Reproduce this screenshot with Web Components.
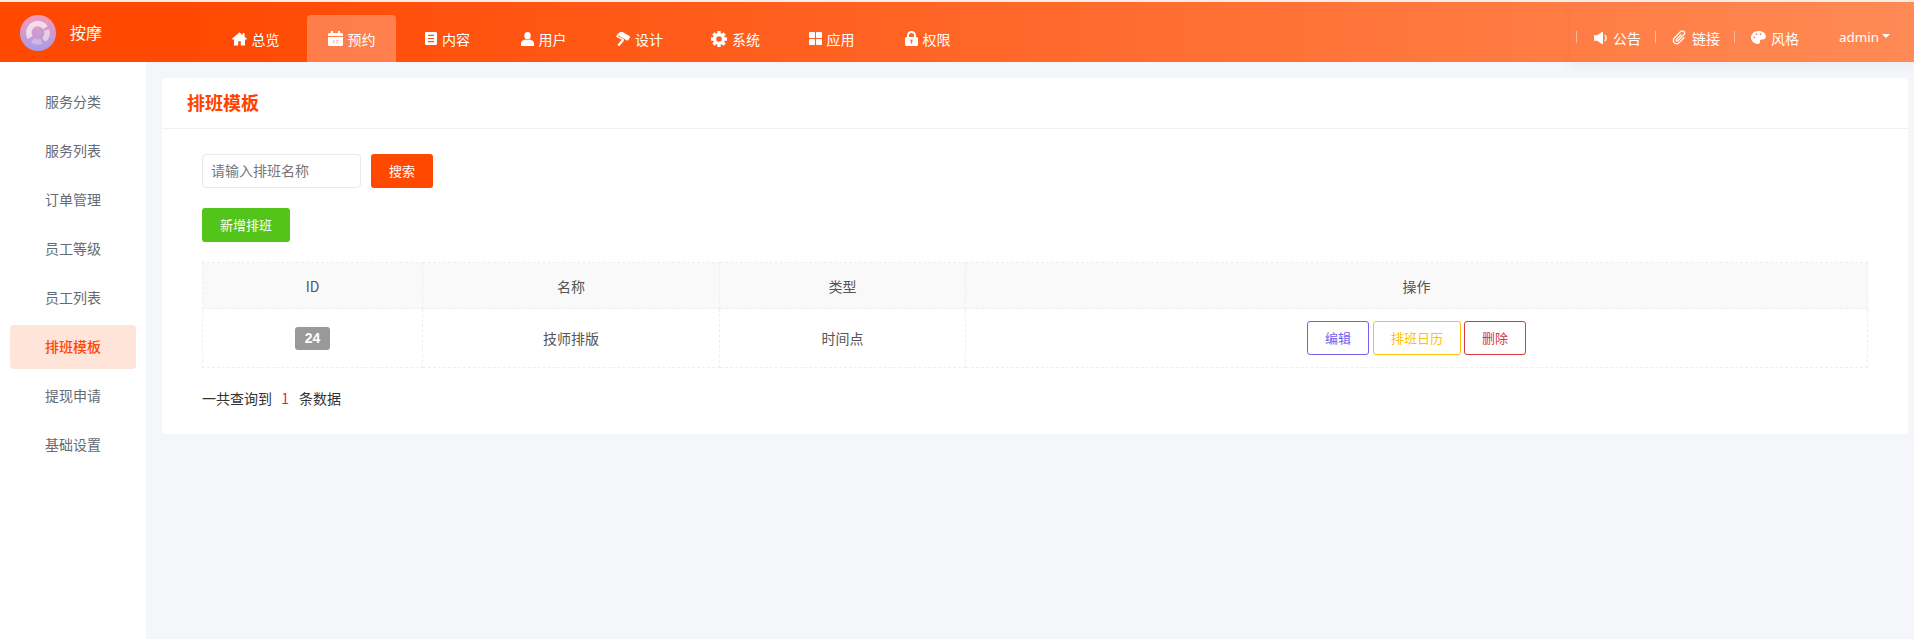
<!DOCTYPE html>
<html lang="zh">
<head>
<meta charset="utf-8">
<title>排班模板</title>
<style>
  html, body { margin: 0; height: 100%; }
  body {
    background: #f5f6fa;
    font-family: "Noto Sans CJK SC", "Liberation Sans", sans-serif;
    font-size: 14px;
    overflow: hidden;
  }
</style>
</head>
<body>
<admin-page>
  <top-bar slot="top"></top-bar>
  <side-menu slot="side"></side-menu>
  <schedule-panel></schedule-panel>
</admin-page>

<script>
const ICONS = {
  home: '<svg width="15" height="14" viewBox="0 0 15 14"><path fill="#fff" d="M7.500.3 0 6.800l1 1.100 1-.8v6.500h4.200V9.300h2.600v4.300H13V7.100l1 .8 1-1.100-2.400-2.100V1.300h-2v1.900z"/></svg>',
  calendar: '<svg width="15" height="15" viewBox="0 0 15 15"><path fill="#fff" d="M3 0h2v2h5V0h2v2h1.500A1.500 1.500 0 0 1 15 3.500V5H0V3.500A1.500 1.500 0 0 1 1.500 2H3zM0 6h15v7.500a1.500 1.500 0 0 1-1.500 1.500h-12A1.500 1.500 0 0 1 0 13.500z"/><path fill="#ffc4ac" d="M5 9h1.500v3.500H5zM8 9h2.500v1.200H8zM8 11.300h2.500v1.200H8z"/></svg>',
  book: '<svg width="12" height="13" viewBox="0 0 12 13"><path fill="#fff" fill-rule="evenodd" d="M1.300 0h9.400A1.300 1.300 0 0 1 12 1.300v10.400a1.300 1.300 0 0 1-1.300 1.300H1.300A1.300 1.300 0 0 1 0 11.700V1.300A1.300 1.300 0 0 1 1.300 0zM3 2.800V4h6V2.800zM3 5.900v1.200h6V5.900zM3 9v1.200h6V9z"/></svg>',
  user: '<svg width="13" height="14" viewBox="0 0 13 14"><ellipse cx="6.500" cy="3.800" rx="3.200" ry="3.700" fill="#fff"/><path fill="#fff" d="M4.400 7.500c1.200 1 3 1 4.200 0C11 7.800 13 9.300 13 11.700V14H0v-2.300C0 9.300 2 7.800 4.400 7.500z"/></svg>',
  roller: '<svg width="14" height="14" viewBox="0 0 14 14"><rect x="2.300" y="1.300" width="11.500" height="5" rx="1" fill="#fff" transform="rotate(30 8 4)"/><path fill="none" stroke="#fff" stroke-width="1.200" d="M2.600 1.600.9 4.400l6.700 3.500"/><path fill="none" stroke="#fff" stroke-width="2.400" stroke-linecap="round" d="M6.800 8.300 3 12.800"/></svg>',
  cog: '<svg width="16" height="16" viewBox="0 0 16 16"><circle cx="8" cy="8" r="4.400" fill="none" stroke="#fff" stroke-width="3.200"/><g fill="#fff"><rect x="6.300" y="0" width="3.400" height="3" rx=".5"/><rect x="6.300" y="13" width="3.400" height="3" rx=".5"/><rect x="0" y="6.300" width="3" height="3.400" rx=".5"/><rect x="13" y="6.300" width="3" height="3.400" rx=".5"/><g transform="rotate(45 8 8)"><rect x="6.300" y="0" width="3.400" height="3" rx=".5"/><rect x="6.300" y="13" width="3.400" height="3" rx=".5"/><rect x="0" y="6.300" width="3" height="3.400" rx=".5"/><rect x="13" y="6.300" width="3" height="3.400" rx=".5"/></g></g></svg>',
  grid: '<svg width="13" height="13" viewBox="0 0 13 13"><g fill="#fff"><rect width="6" height="6" rx=".8"/><rect x="7" width="6" height="6" rx=".8"/><rect y="7" width="6" height="6" rx=".8"/><rect x="7" y="7" width="6" height="6" rx=".8"/></g></svg>',
  lock: '<svg width="13" height="15" viewBox="0 0 13 15"><path fill="#fff" fill-rule="evenodd" d="M6.500 0A4.500 4.500 0 0 1 11 4.500V6h.5A1.500 1.500 0 0 1 13 7.500v6a1.500 1.500 0 0 1-1.500 1.500h-10A1.500 1.500 0 0 1 0 13.500v-6A1.500 1.500 0 0 1 1.500 6H2V4.500A4.500 4.500 0 0 1 6.500 0zm0 2A2.500 2.500 0 0 0 4 4.500V6h5V4.500A2.500 2.500 0 0 0 6.500 2zm0 6.500a1.200 1.200 0 0 0-.6 2.200V12.500h1.200v-1.800a1.200 1.200 0 0 0-.6-2.200z"/></svg>',
  volume: '<svg width="13" height="12" viewBox="0 0 13 12"><path fill="#fff" d="M0 3.300h3.200L8 0h1v12H8L3.200 8.700H0z"/><path fill="none" stroke="#fff" stroke-width="1.300" d="M10.800 3c1.500 1.700 1.500 4.300 0 6"/></svg>',
  clip: '<svg width="15" height="15" viewBox="-2.800 .6 14.800 14.800"><path fill="none" stroke="#fff" stroke-width="1.200" stroke-linecap="round" transform="rotate(45 4.600 8)" d="M3.700 5v6.500a1 1 0 0 0 2 0V3a2.200 2.200 0 0 0-4.400 0v9a3.300 3.300 0 0 0 6.600 0V5"/></svg>',
  palette: '<svg width="15" height="13" viewBox="0 0 15 13"><path fill="#fff" fill-rule="evenodd" d="M7.500 0C12 0 15 2.500 15 5.600c0 2.200-1.800 3.100-3.500 3-1.500-.1-2.500.3-2.500 1.700 0 1.300-.3 2.700-2 2.700C3 13 0 10 0 6.500 0 2.800 3.300 0 7.500 0zM3.500 5.500a.9.9 0 1 0 0 1.800.9.900 0 0 0 0-1.800zM5.500 2.300a.9.900 0 1 0 0 1.800.9.900 0 0 0 0-1.800zM9.500 2.300a.9.900 0 1 0 0 1.800.9.900 0 0 0 0-1.800z"/></svg>'
};

// small helper, every element below only differs by its markup
class ShadowEl extends HTMLElement {
  constructor() {
    super();
    this.shadowDOM = this.attachShadow({ mode: 'open' });
  }
  connectedCallback() {
    this.render();
  }
}

class AdminPage extends ShadowEl {
  render() {
    this.shadowDOM.innerHTML = `
      <style>
        :host { display: flex; flex-direction: column; height: 100vh; }
        .body { display: flex; flex: 1; min-height: 0; }
        .main { flex: 1; min-width: 0; padding: 16px 6px 0 16px; }
      </style>
      <slot name="top"></slot>
      <div class="body">
        <slot name="side"></slot>
        <div class="main"><slot></slot></div>
      </div>`;
  }
}

class NavItem extends ShadowEl {
  render() {
    const active = this.hasAttribute('active');
    this.shadowDOM.innerHTML = `
      <style>
        :host { display: flex; width: 89px; margin-right: 7px; height: 47px; }
        a {
          flex: 1; display: flex; align-items: center; justify-content: center; gap: 5px;
          color: #fff; font-size: 14px; box-sizing: border-box;
          border-radius: 4px 4px 0 0;
          background: ${active ? 'rgba(255,255,255,.27)' : 'transparent'};
        }
        svg { display: block; }
      </style>
      <a>${ICONS[this.getAttribute('icon')]}<span><slot></slot></span></a>`;
  }
}

class ToolItem extends ShadowEl {
  render() {
    this.shadowDOM.innerHTML = `
      <style>
        :host { display: flex; align-items: center; color: #fff; font-size: 14px; gap: 5px; height: 60px; padding-top: 11px; box-sizing: border-box; }
        .sep { width: 1px; height: 12px; background: rgba(255,255,255,.45); margin-right: 10px; margin-top: -2px; }
        svg { display: block; }
        .ic { display: flex; width: 16px; justify-content: center; }
      </style>
      <div class="sep"></div>
      <span class="ic">${ICONS[this.getAttribute('icon')]}</span>
      <span><slot></slot></span>`;
  }
}

class TopBar extends ShadowEl {
  render() {
    this.shadowDOM.innerHTML = `
      <style>
        :host {
          display: flex; flex: none; height: 60px; position: relative; z-index: 2;
          border-top: 2px solid #fbece5;
          background: linear-gradient(90deg, #ff4800, #ff4a04 12%, #ff8a55);
        }
        .brand { width: 211px; display: flex; align-items: center; padding-left: 20px; box-sizing: border-box; gap: 14px; color: #fff; font-size: 16px; padding-top: 2px; }
        .brand svg { display: block; }
        .brand span { margin-top: -2px; }
        nav { display: flex; align-items: flex-end; flex: 1; }
        .tools {
          display: flex; align-items: center; padding: 0 24px 0 6px; gap: 14px;
          box-shadow: 0 5px 12px rgba(60,60,100,.05);
        }
        .admin { color: #fff; font-size: 13.4px; font-family: "Noto Sans", "Liberation Sans", sans-serif; margin-left: 26px; display: flex; align-items: center; gap: 3px; padding-top: 9px; }
        .admin i { width: 0; height: 0; border: 4px solid transparent; border-top-color: #fff; border-bottom: 0; margin-top: -2px; }
      </style>
      <div class="brand">
        <svg width="36" height="36" viewBox="0 0 36 36">
          <defs><linearGradient id="lg" x1="0" y1="0" x2="0" y2="1"><stop offset="0" stop-color="#f59ab8"/><stop offset="1" stop-color="#a79be6"/></linearGradient></defs>
          <circle cx="18" cy="18" r="18" fill="url(#lg)"/>
          <g fill="none" stroke="#fff" stroke-width="5.500">
            <path stroke-opacity=".65" d="M10.200 22.500A9 9 0 1 1 25.400 12.800"/>
            <path stroke-opacity=".5" d="M26.500 15A9 9 0 0 1 23.800 24.900"/>
            <path stroke-opacity=".28" d="M21.500 26.300A9 9 0 0 1 12.500 25.100"/>
          </g>
        </svg>
        <span>按摩</span>
      </div>
      <nav>
        <nav-item icon="home">总览</nav-item>
        <nav-item icon="calendar" active>预约</nav-item>
        <nav-item icon="book">内容</nav-item>
        <nav-item icon="user">用户</nav-item>
        <nav-item icon="roller">设计</nav-item>
        <nav-item icon="cog">系统</nav-item>
        <nav-item icon="grid">应用</nav-item>
        <nav-item icon="lock">权限</nav-item>
      </nav>
      <div class="tools">
        <tool-item icon="volume">公告</tool-item>
        <tool-item icon="clip">链接</tool-item>
        <tool-item icon="palette">风格</tool-item>
        <div class="admin">admin<i></i></div>
      </div>`;
  }
}

class SideItem extends ShadowEl {
  render() {
    const active = this.hasAttribute('active');
    this.shadowDOM.innerHTML = `
      <style>
        :host {
          display: flex; align-items: center; justify-content: center; height: 44px;
          box-sizing: border-box; padding-bottom: 2px;
          border-radius: 4px; font-size: 14px;
          color: ${active ? '#ff4800' : '#666a75'};
          font-weight: ${active ? '500' : '400'};
          background: ${active ? '#ffe4d9' : 'transparent'};
        }
      </style>
      <slot></slot>`;
  }
}

class SideMenu extends ShadowEl {
  render() {
    this.shadowDOM.innerHTML = `
      <style>
        :host {
          display: flex; flex-direction: column; gap: 5px; flex: none;
          width: 146px; box-sizing: border-box; padding: 18px 10px 0;
          background: #fff;
        }
      </style>
      <side-item>服务分类</side-item>
      <side-item>服务列表</side-item>
      <side-item>订单管理</side-item>
      <side-item>员工等级</side-item>
      <side-item>员工列表</side-item>
      <side-item active>排班模板</side-item>
      <side-item>提现申请</side-item>
      <side-item>基础设置</side-item>`;
  }
}

class FillBtn extends ShadowEl {
  render() {
    const bg = this.getAttribute('color');
    this.shadowDOM.innerHTML = `
      <style>
        :host {
          display: inline-flex; align-items: center; justify-content: center;
          height: 34px; box-sizing: border-box; padding: 0 18px 2px;
          background: ${bg}; color: #fff; font-size: 13px; border-radius: 3px;
        }
      </style>
      <slot></slot>`;
  }
}

class LineBtn extends ShadowEl {
  render() {
    const c = this.getAttribute('color');
    this.shadowDOM.innerHTML = `
      <style>
        :host {
          display: inline-flex; align-items: center; justify-content: center;
          height: 34px; box-sizing: border-box; padding: 0 17px 2px;
          border: 1px solid ${c}; color: ${c}; font-size: 13px; border-radius: 3px;
        }
      </style>
      <slot></slot>`;
  }
}

class ScheduleTable extends ShadowEl {
  render() {
    this.shadowDOM.innerHTML = `
      <style>
        :host { display: block; }
        table { width: 100%; border-collapse: collapse; table-layout: fixed; color: #555; font-size: 14px; }
        th, td { border: 1px dashed #eee; text-align: center; padding: 0; font-weight: 400; }
        th { background: #f9f9f9; height: 45px; }
        td { height: 58px; }
        .badge {
          display: inline-flex; align-items: center; justify-content: center;
          width: 35px; height: 23px; border-radius: 3px; background: #999; color: #fff;
          font: bold 14px "Liberation Sans", sans-serif; vertical-align: middle;
        }
        .ops { display: flex; justify-content: center; gap: 3px; }
        .ops line-btn:nth-child(2) { margin-left: 1px; }
      </style>
      <table>
        <colgroup><col style="width:220px"><col style="width:297px"><col style="width:246px"><col></colgroup>
        <thead>
          <tr><th>ID</th><th>名称</th><th>类型</th><th>操作</th></tr>
        </thead>
        <tbody>
          <tr>
            <td><span class="badge">24</span></td>
            <td>技师排版</td>
            <td>时间点</td>
            <td>
              <div class="ops">
                <line-btn color="#7360f0">编辑</line-btn>
                <line-btn color="#ffc107">排班日历</line-btn>
                <line-btn color="#dc3545">删除</line-btn>
              </div>
            </td>
          </tr>
        </tbody>
      </table>`;
  }
}

class SchedulePanel extends ShadowEl {
  render() {
    this.shadowDOM.innerHTML = `
      <style>
        :host { display: block; background: #fff; border-radius: 4px; height: 356px; }
        h2 { margin: 0; height: 51px; line-height: 49px; padding-left: 25px; box-sizing: border-box; font-size: 18px; font-weight: 700; color: #ff4200; border-bottom: 1px solid #f2f2f2; }
        .content { padding: 25px 40px 0; }
        .search { display: flex; gap: 10px; }
        input {
          width: 159px; height: 34px; box-sizing: border-box; padding: 0 8px 2px;
          border: 1px solid #e8e8ee; border-radius: 4px; outline: none;
          font: 14px "Noto Sans CJK SC", "Liberation Sans", sans-serif;
        }
        input::placeholder { color: #777; }
        .add { margin: 20px 0; }
        .add fill-btn { display: inline-flex; }
        .total { margin-top: 20px; color: #333; font-size: 14px; line-height: 20px; }
        .total b { font-weight: 400; color: #f0193a; margin: 0 7px 0 6px; }
      </style>
      <h2>排班模板</h2>
      <div class="content">
        <div class="search">
          <input placeholder="请输入排班名称">
          <fill-btn color="#ff4800">搜索</fill-btn>
        </div>
        <div class="add"><fill-btn color="#52c41a">新增排班</fill-btn></div>
        <schedule-table></schedule-table>
        <div class="total">一共查询到 <b>1</b> 条数据</div>
      </div>`;
  }
}

customElements.define('nav-item', NavItem);
customElements.define('tool-item', ToolItem);
customElements.define('top-bar', TopBar);
customElements.define('side-item', SideItem);
customElements.define('side-menu', SideMenu);
customElements.define('fill-btn', FillBtn);
customElements.define('line-btn', LineBtn);
customElements.define('schedule-table', ScheduleTable);
customElements.define('schedule-panel', SchedulePanel);
customElements.define('admin-page', AdminPage);
</script>
</body>
</html>
